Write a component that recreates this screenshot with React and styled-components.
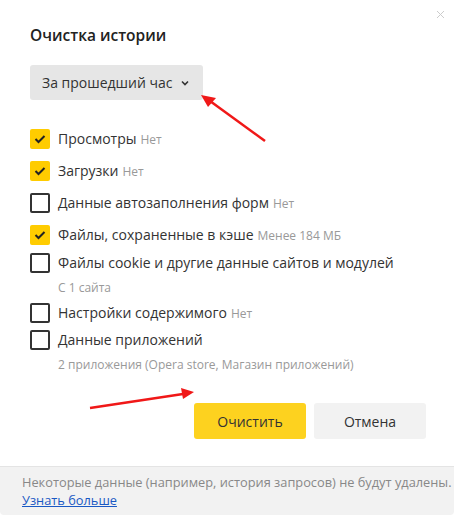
import React from "react";
import styled, { createGlobalStyle } from "styled-components";

const Global = createGlobalStyle`
  html, body { margin: 0; padding: 0; background: #fff; }
  body { font-family: "Open Sans", "Noto Sans", sans-serif; color: #333; }
`;

const Dialog = styled.div`
  position: relative;
  width: 456px;
  height: 517px;
  box-sizing: border-box;
  background: #fff;
  display: flex;
  flex-direction: column;
  overflow: hidden;
`;

const Body = styled.div`
  flex: 1;
  padding: 24px 30px 0 30px;
  display: flex;
  flex-direction: column;
`;

const Title = styled.h1`
  margin: 0;
  font-size: 15.5px;
  font-weight: 600;
  line-height: 22px;
  color: #222;
`;

const Close = styled.button`
  position: absolute;
  top: 8px;
  right: 10px;
  width: 12px;
  height: 12px;
  padding: 0;
  border: 0;
  background: none;
  display: flex;
`;

const Select = styled.button`
  margin-top: 19px;
  align-self: flex-start;
  height: 35px;
  width: 173px;
  border: 0;
  border-radius: 3px;
  background: #e6e6e6;
  font-family: inherit;
  font-size: 14px;
  color: #333;
  display: flex;
  align-items: center;
  padding: 0 14px 0 12px;
  justify-content: space-between;
`;

const List = styled.div`
  margin-top: 29px;
  display: flex;
  flex-direction: column;
`;

const Row = styled.div`
  display: grid;
  grid-template-columns: 20px 1fr;
  column-gap: 8px;
  margin-bottom: ${p => p.$gap}px;
`;

const Box = styled.span`
  width: 20px;
  height: 20px;
  box-sizing: border-box;
  border-radius: 2px;
  background: ${p => (p.$on ? "#ffcc00" : "#fff")};
  border: ${p => (p.$on ? "0" : "2px solid #333")};
  display: flex;
  align-items: center;
  justify-content: center;
`;

const Label = styled.div`
  display: flex;
  align-items: baseline;
  height: 20px;
  font-size: 14px;
  line-height: 20px;
  color: #333;
  white-space: nowrap;
`;

const Hint = styled.span`
  font-size: 12px;
  line-height: 20px;
  color: #999;
  margin-left: 4px;
`;

const Sub = styled.div`
  grid-column: 2;
  font-size: 12px;
  color: #999;
  line-height: 16px;
  margin-top: 7px;
`;

const Buttons = styled.div`
  display: flex;
  justify-content: flex-end;
  gap: 8px;
`;

const Btn = styled.button`
  width: 112px;
  height: 36px;
  border: 0;
  border-radius: 3px;
  font-family: inherit;
  font-size: 14px;
  color: #333;
  background: ${p => (p.$primary ? "#fdd21f" : "#f2f2f2")};
`;

const Footer = styled.div`
  margin: 0 2px 2px 0;
  height: 49px;
  box-sizing: border-box;
  border-top: 1px solid #e4e4e4;
  border-radius: 0 0 4px 4px;
  background: #f2f2f2;
  padding: 6px 10px 6px 22px;
  font-size: 12.8px;
  line-height: 18px;
  color: #888;
  white-space: nowrap;
`;

const Link = styled.a`
  color: #1a59c4;
  text-decoration: underline;
`;

const Arrows = styled.svg`
  position: absolute;
  left: 0;
  top: 0;
  pointer-events: none;
`;

const Check = () => (
  <svg width="12" height="10" viewBox="0 0 12 10">
    <path d="M1.5 5 L4.5 8 L10.5 2" fill="none" stroke="#222" strokeWidth="2" />
  </svg>
);

const items = [
  { label: "Просмотры", hint: "Нет", on: true, gap: 12 },
  { label: "Загрузки", hint: "Нет", on: true, gap: 12 },
  { label: "Данные автозаполнения форм", hint: "Нет", on: false, gap: 12 },
  { label: "Файлы, сохраненные в кэше", hint: "Менее 184 МБ", on: true, gap: 8 },
  { label: "Файлы cookie и другие данные сайтов и модулей", sub: "С 1 сайта", on: false, gap: 7 },
  { label: "Настройки содержимого", hint: "Нет", on: false, gap: 7 },
  { label: "Данные приложений", sub: "2 приложения (Opera store, Магазин приложений)", on: false, gap: 30 },
];

export default function App() {
  return (
    <>
      <Global />
      <Dialog>
        <Close aria-label="close">
          <svg width="12" height="12" viewBox="0 0 12 12">
            <path d="M3 3 L10 10 M10 3 L3 10" stroke="#ccc" strokeWidth="1" />
          </svg>
        </Close>
        <Body>
          <Title>Очистка истории</Title>
          <Select>
            За прошедший час
            <svg width="8" height="6" viewBox="0 0 8 6">
              <path d="M1 1.5 L4 4.5 L7 1.5" fill="none" stroke="#333" strokeWidth="1.6" />
            </svg>
          </Select>
          <List>
            {items.map(it => (
              <Row key={it.label} $gap={it.gap}>
                <Box $on={it.on}>{it.on && <Check />}</Box>
                <Label>
                  {it.label}
                  {it.hint && <Hint>{it.hint}</Hint>}
                </Label>
                {it.sub && <Sub>{it.sub}</Sub>}
              </Row>
            ))}
          </List>
          <Buttons>
            <Btn $primary>Очистить</Btn>
            <Btn>Отмена</Btn>
          </Buttons>
        </Body>
        <Footer>
          Некоторые данные (например, история запросов) не будут удалены.
          <br />
          <Link href="#">Узнать больше</Link>
        </Footer>
        <Arrows width="456" height="517" viewBox="0 0 456 517">
          <g stroke="#f01818" strokeWidth="2.5" fill="#f01818">
            <line x1="265" y1="141" x2="210" y2="101" />
            <polygon points="201,95 216,98 208,107" stroke="none" />
            <line x1="90" y1="408" x2="183" y2="394" />
            <polygon points="194,392 181,388 183,399" stroke="none" />
          </g>
        </Arrows>
      </Dialog>
    </>
  );
}
